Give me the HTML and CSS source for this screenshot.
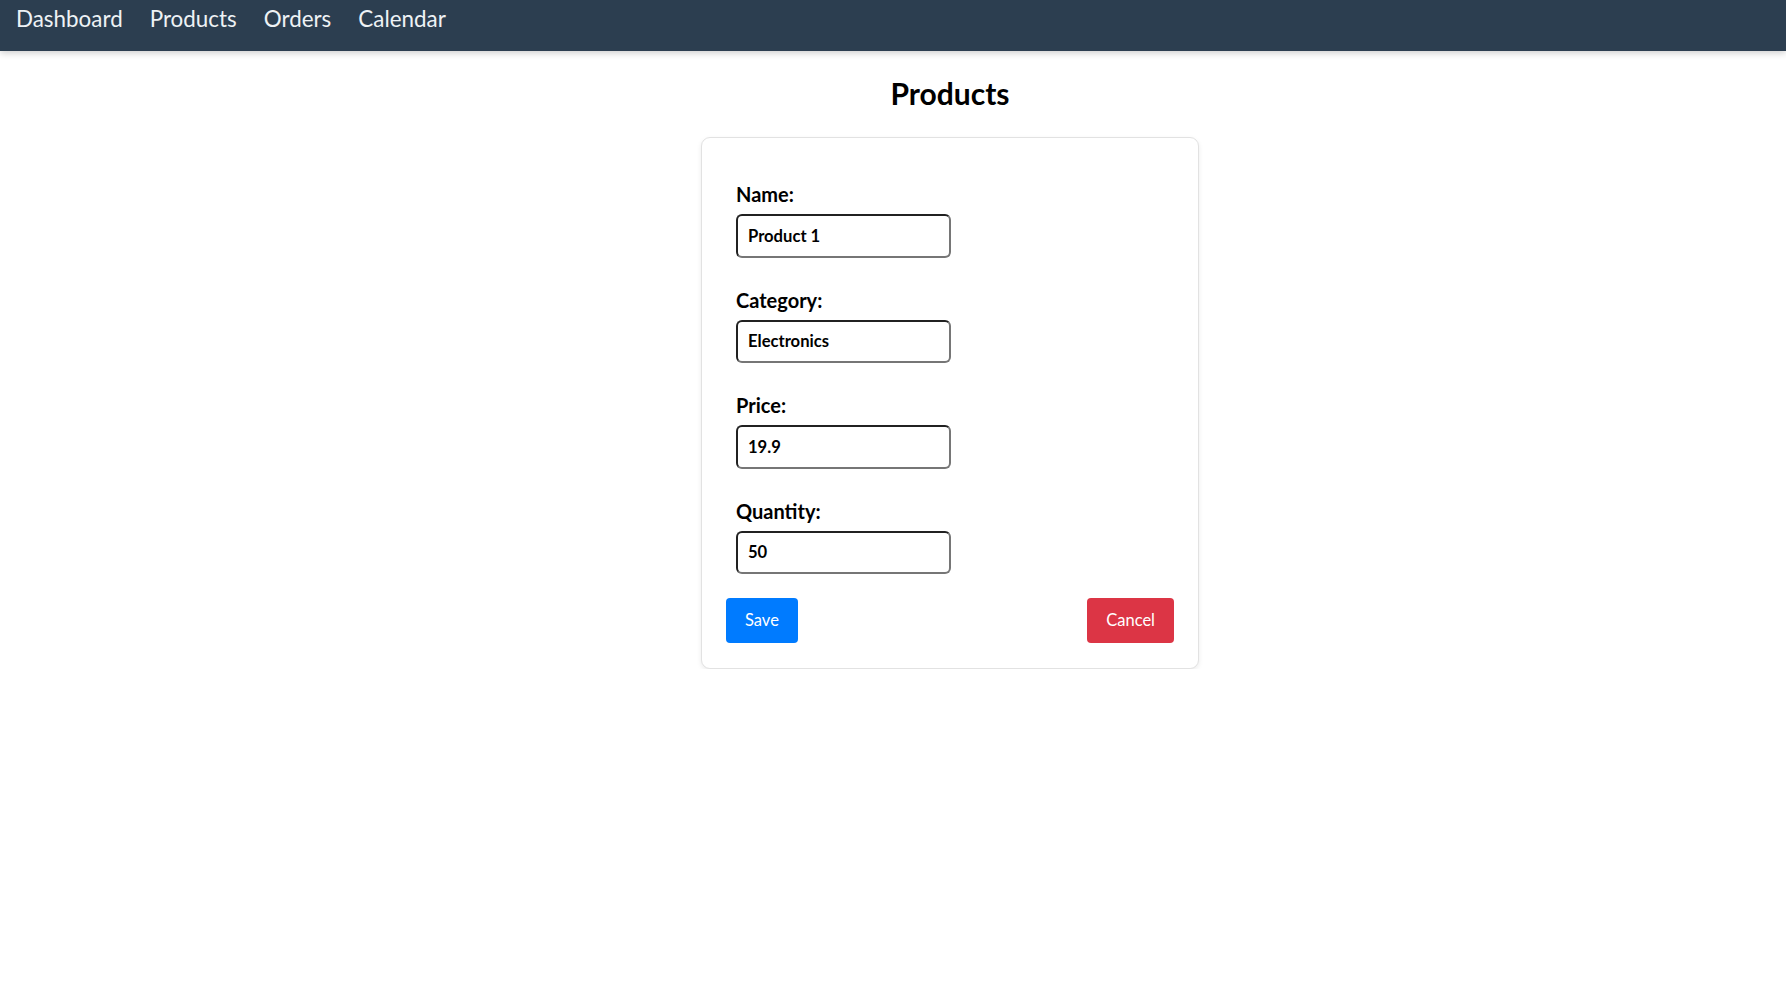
FILE: index.html
```html
<!DOCTYPE html>
<html lang="en">
<head>
<meta charset="utf-8">
<title>Products</title>
<link rel="stylesheet" href="styles.css">
</head>
<body>
<nav class="topnav">
  <a class="nav-link" href="#">Dashboard</a>
  <a class="nav-link" href="#">Products</a>
  <a class="nav-link" href="#">Orders</a>
  <a class="nav-link" href="#">Calendar</a>
</nav>
<main class="main">
  <h1 class="page-title">Products</h1>
  <form class="card">
    <div class="field">
      <label class="field-label" for="name">Name:</label>
      <input class="field-input" id="name" type="text" value="Product 1">
    </div>
    <div class="field">
      <label class="field-label" for="category">Category:</label>
      <input class="field-input" id="category" type="text" value="Electronics">
    </div>
    <div class="field">
      <label class="field-label" for="price">Price:</label>
      <input class="field-input" id="price" type="text" value="19.9">
    </div>
    <div class="field">
      <label class="field-label" for="quantity">Quantity:</label>
      <input class="field-input" id="quantity" type="text" value="50">
    </div>
    <div class="actions">
      <button class="btn btn-save" type="button">Save</button>
      <button class="btn btn-cancel" type="button">Cancel</button>
    </div>
  </form>
</main>
</body>
</html>
```

FILE: styles.css
```css
* { box-sizing: border-box; }

html, body {
  margin: 0;
  padding: 0;
  background: #ffffff;
  font-family: Lato, "Open Sans", "Liberation Sans", sans-serif;
  color: #000;
}

.topnav {
  display: flex;
  align-items: flex-start;
  gap: 27px;
  height: 51px;
  padding: 5px 16px 0;
  background: #2c3e50;
  box-shadow: 0 2px 7px rgba(0, 0, 0, 0.2);
}

.nav-link {
  color: #eef2f5;
  text-decoration: none;
  font-size: 22.4px;
  line-height: 27px;
}

.main {
  margin-left: 114px;
  display: flex;
  flex-direction: column;
  align-items: center;
}

.page-title {
  margin: 24px 0 26px;
  font-size: 30px;
  font-weight: 700;
  line-height: 36px;
}

.card {
  display: block;
  width: 498px;
  border: 1px solid #e2e2e2;
  border-radius: 9px;
  box-shadow: 0 2px 5px rgba(0, 0, 0, 0.08);
  padding: 24px 24px 25px;
  background: #fff;
}

.field {
  padding: 10px;
  margin: 10px 0;
}

.field-label {
  display: block;
  font-size: 20px;
  font-weight: 700;
  line-height: 24px;
  margin-bottom: 8px;
}

.field-input {
  display: block;
  width: 215px;
  height: 43.5px;
  padding: 0 10px;
  border: 2px inset #767676;
  border-radius: 6px;
  font-family: Lato, "Open Sans", "Liberation Sans", sans-serif;
  font-size: 16.6px;
  font-weight: 700;
  color: #000;
  background: #fff;
}

.actions {
  display: flex;
  justify-content: space-between;
  margin-top: 13.5px;
}

.btn {
  height: 45px;
  padding: 0 19px;
  border: none;
  border-radius: 4px;
  color: #fff;
  font-family: Lato, "Open Sans", "Liberation Sans", sans-serif;
  font-size: 16.5px;
  cursor: pointer;
}

.btn-save { background: #007bff; }
.btn-cancel { background: #dc3545; }
```
